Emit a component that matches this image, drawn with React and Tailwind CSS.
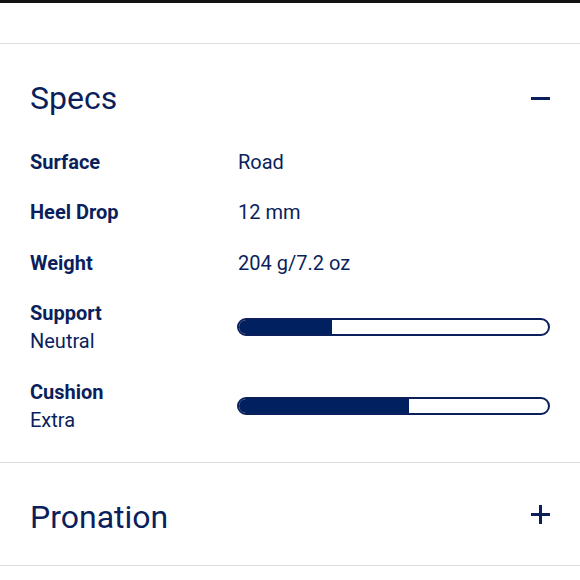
import React from "react";

const NAVY = "text-[#0b1f5c]";

function Bar({ pct }) {
  return (
    <div className="h-[18px] w-[313px] rounded-full border-2 border-[#0b1f5c] overflow-hidden bg-white">
      <div className="h-full bg-[#002060]" style={{ width: `${pct}%` }} />
    </div>
  );
}

function Row({ label, value, className = "" }) {
  return (
    <div className={`flex items-center leading-[28px] text-[20px] ${className}`}>
      <div className="w-[208px] font-bold">{label}</div>
      <div>{value}</div>
    </div>
  );
}

function BarRow({ label, sub, pct, className = "" }) {
  return (
    <div className={`flex items-center text-[20px] leading-[28px] ${className}`}>
      <div className="w-[207px]">
        <div className="font-bold">{label}</div>
        <div>{sub}</div>
      </div>
      <Bar pct={pct} />
    </div>
  );
}

export default function App() {
  return (
    <div
      className={`w-[580px] h-[580px] bg-white overflow-hidden ${NAVY}`}
      style={{ fontFamily: "Roboto, 'Liberation Sans', sans-serif" }}
    >
      <div className="h-[44px] border-t-[3px] border-[#111] border-b border-b-[#dedede]" />
      <section className="border-b border-[#dedede] pl-[30px] pr-[29px] pb-[28px]">
        <div className="flex items-center justify-between pt-[34px] pb-[30px]">
          <h2 className="text-[32px] leading-[40px] font-normal">Specs</h2>
          <div className="w-[19px] h-[3px] bg-[#0b1f5c] mr-[1px]" />
        </div>
        <div className="flex flex-col">
          <Row label="Surface" value="Road" />
          <Row label="Heel Drop" value="12 mm" className="mt-[22px]" />
          <Row label="Weight" value="204 g/7.2 oz" className="mt-[23px]" />
          <BarRow label="Support" sub="Neutral" pct={30} className="mt-[22px]" />
          <BarRow label="Cushion" sub="Extra" pct={55} className="mt-[23px]" />
        </div>
      </section>
      <section className="border-b border-[#dedede] pl-[30px] pr-[29px] pt-[34px] pb-[28px]">
        <div className="flex items-center justify-between">
          <h2 className="text-[32px] leading-[40px] font-normal">Pronation</h2>
          <svg width="19" height="19" viewBox="0 0 19 19" className="mr-[1px] -mt-[6px]">
            <rect x="0" y="8" width="19" height="3" fill="#0b1f5c" />
            <rect x="8" y="0" width="3" height="19" fill="#0b1f5c" />
          </svg>
        </div>
      </section>
    </div>
  );
}
